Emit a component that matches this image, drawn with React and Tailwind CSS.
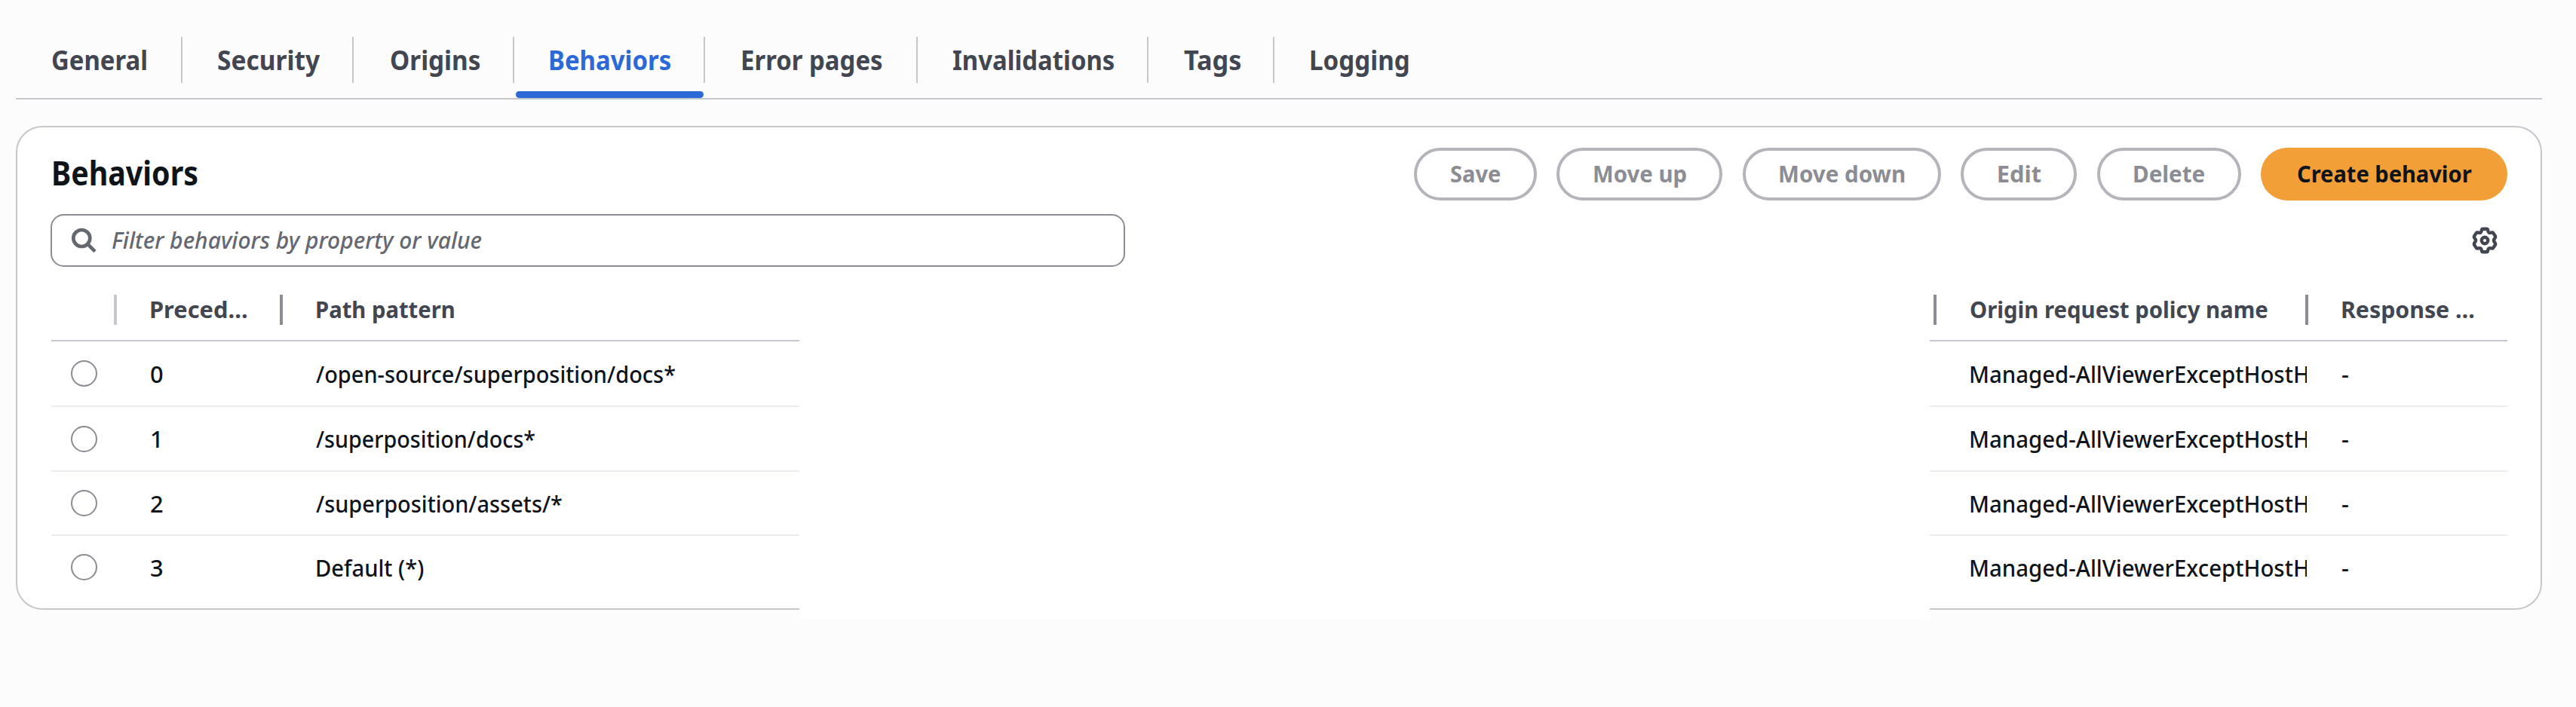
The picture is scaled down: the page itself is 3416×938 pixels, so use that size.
import { useLayoutEffect, useRef } from "react";

function Fit({ w, children, className = "" }) {
  const ref = useRef(null);
  useLayoutEffect(() => {
    const el = ref.current;
    el.style.transform = "none";
    el.style.transform = `scaleX(${w / el.offsetWidth})`;
  }, [w, children]);
  return (
    <span className={`block shrink-0 ${className}`} style={{ width: w }}>
      <span ref={ref} className="block w-max origin-left whitespace-nowrap">
        {children}
      </span>
    </span>
  );
}

const tabs = [
  { label: "General", w: 128, cell: "w-[221px] pl-[47px]" },
  { label: "Security", w: 136, cell: "w-[227px] pl-[46px]" },
  { label: "Origins", w: 120, cell: "w-[213px] pl-[48px]" },
  { label: "Behaviors", w: 163, cell: "w-[253px] pl-[45px]", active: true },
  { label: "Error pages", w: 189, cell: "w-[282px] pl-[47px]" },
  { label: "Invalidations", w: 215, cell: "w-[306px] pl-[46px]" },
  { label: "Tags", w: 76, cell: "w-[167px] pl-[47px]" },
  { label: "Logging", w: 134, cell: "w-[226px] pl-[46px]", last: true },
];

const buttons = [
  { label: "Save", w: 67, size: "w-[163px]" },
  { label: "Move up", w: 125, size: "w-[220px]" },
  { label: "Move down", w: 169, size: "w-[263px]" },
  { label: "Edit", w: 59, size: "w-[154px]" },
  { label: "Delete", w: 96, size: "w-[191px]" },
];

const rows = [
  { path: "/open-source/superposition/docs*", w: 477, pad: "pl-[44px]", h: "h-[87px]" },
  { path: "/superposition/docs*", w: 291, pad: "pl-[44px]", h: "h-[86px]" },
  { path: "/superposition/assets/*", w: 327, pad: "pl-[44px]", h: "h-[85px]" },
  { path: "Default (*)", w: 144, pad: "pl-[43px]", h: "h-[83px]", last: true },
];

const COLS = "grid grid-cols-[87px_220px_2193px_493px_264px]";

function SearchIcon() {
  return (
    <svg width="36" height="36" viewBox="0 0 36 36" fill="none" stroke="#656871" strokeWidth="4.7">
      <circle cx="15.3" cy="15" r="11" />
      <path d="M23 22.6 L33 32.6" />
    </svg>
  );
}

function GearIcon() {
  return (
    <svg width="36" height="38" viewBox="-18 -19 36 38" fill="none" stroke="#424650" strokeWidth="4.4" strokeLinejoin="round">
      <circle r="4.2" />
      <path d="M-2.6 -15.3 H2.6 Q3.9 -15.3 4.1 -13.6 Q4.6 -9.2 8.4 -10.4 Q10.2 -11 11.2 -9.9 L13.8 -6 Q14.6 -4.4 13.4 -3 Q10.6 0 13.4 3 Q14.6 4.4 13.8 6 L11.2 9.9 Q10.2 11 8.4 10.4 Q4.6 9.2 4.1 13.6 Q3.9 15.3 2.6 15.3 H-2.6 Q-3.9 15.3 -4.1 13.6 Q-4.6 9.2 -8.4 10.4 Q-10.2 11 -11.2 9.9 L-13.8 6 Q-14.6 4.4 -13.4 3 Q-10.6 0 -13.4 -3 Q-14.6 -4.4 -13.8 -6 L-11.2 -9.9 Q-10.2 -11 -8.4 -10.4 Q-4.6 -9.2 -4.1 -13.6 Q-3.9 -15.3 -2.6 -15.3 Z" />
    </svg>
  );
}

function HeadCell({ label, w, pad, divider }) {
  return (
    <div className={`flex h-[40px] items-center ${pad} ${divider}`}>
      {label && <Fit w={w} className="-mt-[2px]">{label}</Fit>}
    </div>
  );
}

export default function App() {
  return (
    <div className="h-[938px] w-[3416px] overflow-hidden bg-[#fcfcfd] pl-[21px] font-['Noto_Sans','Open_Sans',sans-serif] text-[30.8px] leading-[44px] font-medium text-[#0f141a]">
      <nav className="flex h-[132px] w-[3350px] border-b-2 border-[#c6c6cd] pt-[49px] text-[35.2px] font-bold text-[#424650]">
        {tabs.map((t) => (
          <div
            key={t.label}
            className={`relative flex h-[61px] items-center ${t.cell} ${t.last ? "" : "border-r-2 border-[#c6c6cd]"} ${t.active ? "text-[#2b69d9]" : ""}`}
          >
            <Fit w={t.w} className="-mt-[2px]">{t.label}</Fit>
            {t.active && <span className="absolute top-[72px] left-[2px] h-[9px] w-[249px] rounded-[4.5px] bg-[#2b69d9]" />}
          </div>
        ))}
      </nav>

      <section className="relative mt-[35px] h-[642px] w-[3350px] rounded-[35px] border-2 border-[#c6c6cd] bg-white pt-[27px] pr-[44px] pl-[45px]">
        <div className="flex h-[70px] items-center justify-between">
          <h2 className="-mt-[4px] text-[44px] font-bold">
            <Fit w={195}>Behaviors</Fit>
          </h2>
          <div className="flex gap-[26.4px] font-bold">
            {buttons.map((b) => (
              <button
                key={b.label}
                className={`flex h-[70px] items-center justify-center rounded-full border-4 border-[#b4b4bb] pb-[2px] text-[#8c8c94] ${b.size}`}
              >
                <Fit w={b.w} className="text-left">{b.label}</Fit>
              </button>
            ))}
            <button className="flex h-[70px] w-[327px] items-center justify-center rounded-full bg-[#f29f38] pb-[2px]">
              <Fit w={232} className="text-left">Create behavior</Fit>
            </button>
          </div>
        </div>

        <div className="mt-[18px] flex h-[70px] items-center justify-between">
          <div className="-ml-px flex h-[70px] w-[1425px] items-center rounded-[17.6px] border-2 border-[#8c8c94] pl-[24px] text-[#656871] italic">
            <SearchIcon />
            <Fit w={491} className="-mt-[2px] ml-[19px]">Filter behaviors by property or value</Fit>
          </div>
          <span className="mr-[12px]">
            <GearIcon />
          </span>
        </div>

        <div className={`h-[99px] items-center border-b-2 border-[#c6c6cd] pt-[17px] font-bold text-[#424650] ${COLS}`}>
          <HeadCell pad="" divider="border-r-4 border-[#c6c6cd]" />
          <HeadCell label="Preced…" w={131} pad="pl-[43px]" divider="border-r-4 border-[#8c8c94]" />
          <HeadCell label="Path pattern" w={186} pad="pl-[43px]" divider="border-r-4 border-[#8c8c94]" />
          <HeadCell label="Origin request policy name" w={396} pad="pl-[44px]" divider="border-r-4 border-[#8c8c94]" />
          <HeadCell label="Response …" w={178} pad="pl-[43px]" divider="" />
        </div>

        {rows.map((r, i) => (
          <div key={r.path} className={`items-center ${COLS} ${r.h} ${r.last ? "" : "border-b-2 border-[#ebebf0]"}`}>
            <span className="ml-[26px] size-[35px] rounded-full border-2 border-[#8c8c94]" />
            <span className="pl-[44px]">{i}</span>
            <span className={r.pad}>
              <Fit w={r.w}>{r.path}</Fit>
            </span>
            <span className="mr-[2px] overflow-hidden pl-[43px]">
              <Fit w={452}>Managed-AllViewerExceptHostH</Fit>
            </span>
            <span className="pl-[44px]">-</span>
          </div>
        ))}

        {/* Blank panel laid over the middle columns */}
        <div className="absolute top-[200px] left-[1037px] h-[452px] w-[1499px] bg-white" />
      </section>
    </div>
  );
}
